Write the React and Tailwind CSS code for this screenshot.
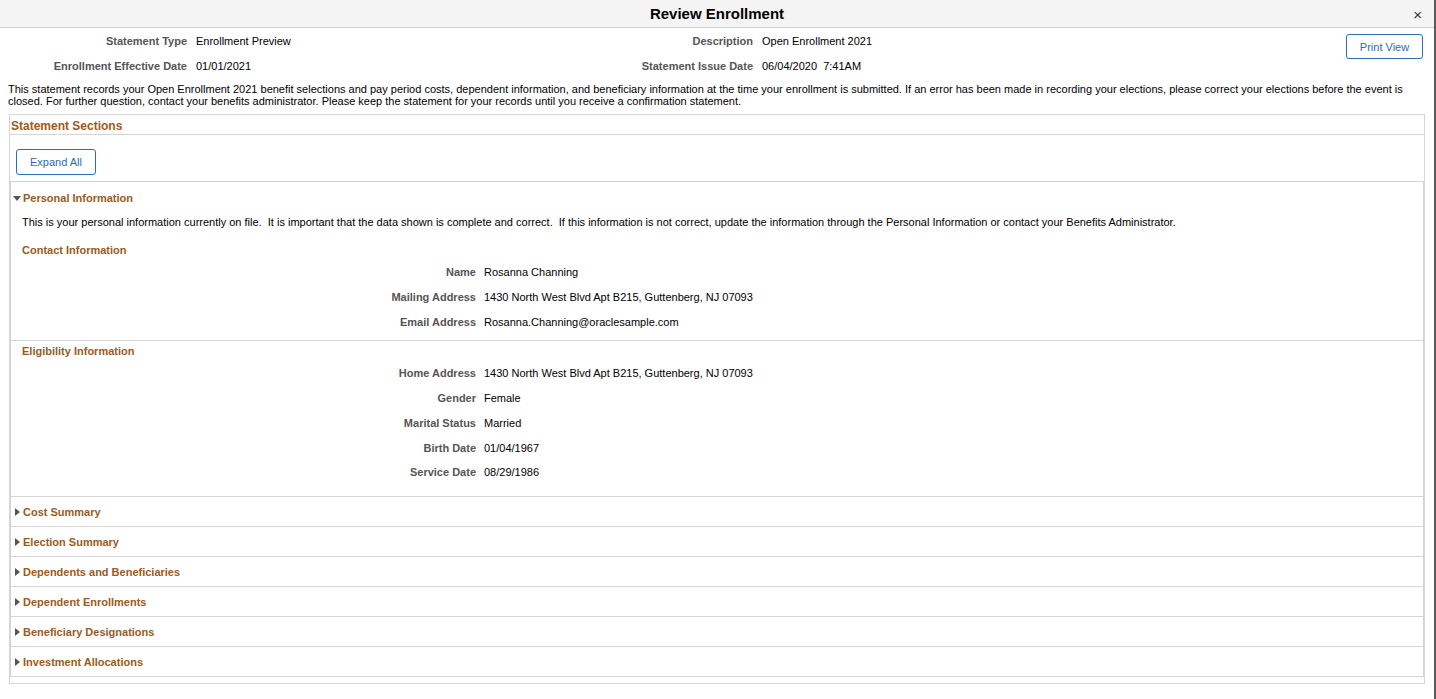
import React from 'react';

const brown = 'text-[#9c5a1e]';

const HeaderField = ({ label, value }) => (
  <div className="flex h-[25px] items-center">
    <div className="w-[187px] shrink-0 text-right font-bold text-[#555]">{label}</div>
    <div className="pl-[9px] text-black whitespace-pre">{value}</div>
  </div>
);

const Field = ({ label, value }) => (
  <div className="flex h-[25px] items-center">
    <div className="w-[465px] shrink-0 text-right font-bold text-[#555]">{label}</div>
    <div className="pl-[8px] text-black">{value}</div>
  </div>
);

const CaretDown = () => (
  <svg width="8" height="5" viewBox="0 0 8 5" className="mr-[2px] ml-[2px]">
    <path d="M0 0 L8 0 L4 5 Z" fill="#555" />
  </svg>
);

const CaretRight = () => (
  <svg width="5" height="8" viewBox="0 0 5 8" className="mr-[3px] ml-[4px]">
    <path d="M0 0 L5 4 L0 8 Z" fill="#555" />
  </svg>
);

const collapsed = [
  'Cost Summary',
  'Election Summary',
  'Dependents and Beneficiaries',
  'Dependent Enrollments',
  'Beneficiary Designations',
  'Investment Allocations',
];

export default function App() {
  return (
    <div
      className="flex h-[699px] w-full bg-[#5a5a5a] text-[11px] leading-[12px]"
      style={{ fontFamily: '"Liberation Sans", Arial, sans-serif' }}
    >
      <div className="w-[1434px] shrink-0 bg-white">
        {/* Title bar */}
        <div className="relative flex h-[28px] items-center justify-center border-b border-[#cfcfcf] bg-[#f4f4f4]">
          <h1 className="text-[15px] font-bold text-black">Review Enrollment</h1>
          <span className="absolute right-[12px] top-[7px] text-[15px] leading-[15px] text-[#333]">×</span>
        </div>

        {/* Statement header */}
        <div className="flex">
          <div className="w-[566px] shrink-0">
            <HeaderField label="Statement Type" value="Enrollment Preview" />
            <HeaderField label="Enrollment Effective Date" value="01/01/2021" />
          </div>
          <div>
            <HeaderField label="Description" value="Open Enrollment 2021" />
            <HeaderField label="Statement Issue Date" value="06/04/2020  7:41AM" />
          </div>
          <div className="ml-auto mr-[11px] mt-[6px]">
            <button className="h-[25px] w-[77px] rounded-[3px] border border-[#2c6cb8] bg-white text-[11px] text-[#2c6cb8]">
              Print View
            </button>
          </div>
        </div>

        <p className="mt-[5px] px-[8px] text-black">
          This statement records your Open Enrollment 2021 benefit selections and pay period costs, dependent information, and beneficiary information at the time your enrollment is submitted. If an error has been made in recording your elections, please correct your elections before the event is closed. For further question, contact your benefits administrator. Please keep the statement for your records until you receive a confirmation statement.
        </p>

        {/* Statement sections */}
        <div className="mx-[9px] mt-[7px] border border-[#d6d6d6] pb-[6px]">
          <div className={`flex h-[20px] items-center border-b border-[#d6d6d6] pt-[2px] pl-[1px] text-[12px] font-bold ${brown}`}>
            Statement Sections
          </div>
          <div className="pt-[14px] pb-[6px] pl-[6px]">
            <button className="h-[26px] w-[80px] rounded-[3px] border border-[#2c6cb8] bg-white text-[11px] text-[#2c6cb8]">
              Expand All
            </button>
          </div>

          <div className="border-x border-t border-[#d0d4da]">
            {/* Personal Information (expanded) */}
            <div className="border-b border-[#d6d6d6] pb-[6px]">
              <div className={`flex h-[32px] items-center font-bold ${brown}`}>
                <CaretDown />
                Personal Information
              </div>
              <div className="flex h-[16px] items-center pl-[11px] text-black whitespace-pre">
                This is your personal information currently on file.  It is important that the data shown is complete and correct.  If this information is not correct, update the information through the Personal Information or contact your Benefits Administrator.
              </div>
              <div className={`mt-[10px] flex h-[19px] items-center pl-[11px] font-bold ${brown}`}>
                Contact Information
              </div>
              <Field label="Name" value="Rosanna Channing" />
              <Field label="Mailing Address" value="1430 North West Blvd Apt B215, Guttenberg, NJ 07093" />
              <Field label="Email Address" value="Rosanna.Channing@oraclesample.com" />
            </div>
            <div className="border-b border-[#d6d6d6] pb-[12px]">
              <div className={`flex h-[19px] items-center pl-[11px] font-bold ${brown}`}>
                Eligibility Information
              </div>
              <Field label="Home Address" value="1430 North West Blvd Apt B215, Guttenberg, NJ 07093" />
              <Field label="Gender" value="Female" />
              <Field label="Marital Status" value="Married" />
              <Field label="Birth Date" value="01/04/1967" />
              <div className="-mt-[1px]">
                <Field label="Service Date" value="08/29/1986" />
              </div>
            </div>

            {/* Collapsed sections */}
            {collapsed.map((title) => (
              <div
                key={title}
                className={`flex h-[30px] items-center border-b border-[#d6d6d6] font-bold ${brown}`}
              >
                <CaretRight />
                {title}
              </div>
            ))}
          </div>
        </div>
      </div>
    </div>
  );
}
